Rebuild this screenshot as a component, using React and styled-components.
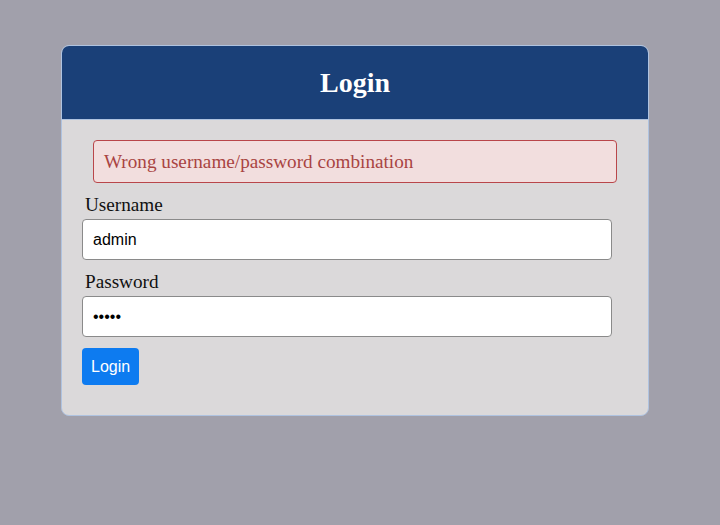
import styled, { createGlobalStyle } from "styled-components";

const GlobalStyle = createGlobalStyle`
  html, body {
    margin: 0;
    padding: 0;
    background-color: #a1a0ab;
    min-height: 100vh;
    font-family: "Liberation Serif", "Times New Roman", serif;
  }
`;

const PageContainer = styled.div`
  padding: 45px 0 0 61px;
  min-height: 480px;
`;

const Card = styled.div`
  width: 586px;
  border: 1px solid #afc3e0;
  border-radius: 8px;
  background-color: #dbd9da;
  overflow: hidden;
`;

const CardHeader = styled.div`
  height: 73px;
  background-color: #1a4078;
  border-bottom: 1px solid #afc3e0;
  display: flex;
  align-items: center;
  justify-content: center;
`;

const Title = styled.h1`
  margin: 0;
  color: #ffffff;
  font-size: 28px;
  font-weight: bold;
`;

const CardBody = styled.form`
  padding: 20px 0 30px 20px;
  display: flex;
  flex-direction: column;
  align-items: flex-start;
`;

const Alert = styled.div`
  box-sizing: border-box;
  width: 524px;
  height: 43px;
  margin-left: 11px;
  padding: 1px 10px 0;
  display: flex;
  align-items: center;
  background-color: #f2dede;
  border: 1px solid #b9464a;
  border-radius: 4px;
  color: #a94442;
  font-size: 19.2px;
`;

const Label = styled.label`
  display: block;
  margin: 12px 0 4px 3px;
  font-size: 19.2px;
  line-height: 20px;
  color: #111111;
`;

const Input = styled.input`
  box-sizing: border-box;
  width: 530px;
  height: 41px;
  padding: 0 10px;
  border: 1px solid #8a8a8a;
  border-radius: 4px;
  background-color: #ffffff;
  font-family: "Liberation Sans", Arial, sans-serif;
  font-size: 16px;
  color: #000000;
  outline: none;
`;

const Button = styled.button`
  margin-top: 11px;
  height: 37px;
  padding: 0 9px;
  border: none;
  border-radius: 4px;
  background-color: #0d7bf0;
  color: #ffffff;
  font-family: "Liberation Sans", Arial, sans-serif;
  font-size: 16px;
  cursor: pointer;
`;

const App = () => {
  return (
    <PageContainer>
      <GlobalStyle />
      <Card>
        <CardHeader>
          <Title>Login</Title>
        </CardHeader>
        <CardBody onSubmit={(e) => e.preventDefault()}>
          <Alert>Wrong username/password combination</Alert>
          <Label htmlFor="username">Username</Label>
          <Input id="username" type="text" defaultValue="admin" />
          <Label htmlFor="password">Password</Label>
          <Input id="password" type="password" defaultValue="admin" />
          <Button type="submit">Login</Button>
        </CardBody>
      </Card>
    </PageContainer>
  );
};

export default App;
